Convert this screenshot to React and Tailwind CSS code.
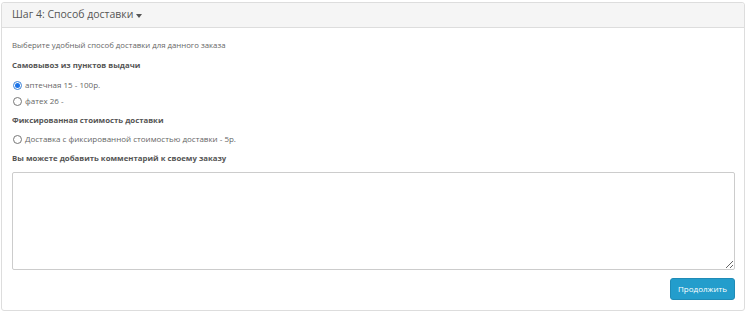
export default function App() {
  const Radio = ({ checked, label }) => (
    <div className="flex items-center h-[12px]">
      {checked ? (
        <span className="w-[9px] h-[9px] rounded-full border border-[#3b82d6] bg-white flex items-center justify-center ml-[11px]">
          <span className="w-[5px] h-[5px] rounded-full bg-[#1a73e8]" />
        </span>
      ) : (
        <span className="w-[9px] h-[9px] rounded-full border border-[#777] bg-white ml-[11px]" />
      )}
      <span className="ml-[3px] text-[8px] text-[#666]">{label}</span>
    </div>
  );
  return (
    <div className="w-[750px] h-[314px] bg-white pt-[2px] pl-[1px]" style={{ fontFamily: '"Open Sans", sans-serif' }}>
      <div className="w-[744px] h-[309px] border border-[#ddd] rounded-[3px] flex flex-col">
        <div className="h-[25px] bg-[#f5f5f5] border-b border-[#ddd] flex items-center pl-[10px] text-[10.5px] text-[#555] rounded-t-[3px]">
          Шаг 4: Способ доставки
          <span className="ml-[3px] w-0 h-0 border-l-[3px] border-r-[3px] border-t-[4px] border-l-transparent border-r-transparent border-t-[#555] mt-[1px]" />
        </div>
        <div className="pl-[10px] pr-[9px] flex flex-col">
          <p className="mt-[11px] h-[12px] leading-[12px] text-[7.8px] text-[#666]">Выберите удобный способ доставки для данного заказа</p>
          <p className="mt-[8px] h-[12px] leading-[12px] text-[7.8px] font-bold text-[#555]">Самовывоз из пунктов выдачи</p>
          <div className="mt-[8px] -ml-[10px]"><Radio checked label="аптечная 15 - 100р." /></div>
          <div className="mt-[4px] -ml-[10px]"><Radio label="фатех 26 -" /></div>
          <p className="mt-[7px] h-[12px] leading-[12px] text-[7.8px] font-bold text-[#555]">Фиксированная стоимость доставки</p>
          <div className="mt-[7px] -ml-[10px]"><Radio label="Доставка с фиксированной стоимостью доставки - 5р." /></div>
          <p className="mt-[7px] h-[12px] leading-[12px] text-[7.8px] font-bold text-[#555]">Вы можете добавить комментарий к своему заказу</p>
          <textarea className="mt-[8px] w-[723px] h-[98px] border border-[#ccc] rounded-[2px] resize-y bg-white" />
          <div className="flex justify-end mt-[8px]">
            <button className="w-[65px] h-[22px] rounded-[3px] bg-[#239dcc] border border-[#1f8bb6] text-white text-[8px]">Продолжить</button>
          </div>
        </div>
      </div>
    </div>
  );
}
